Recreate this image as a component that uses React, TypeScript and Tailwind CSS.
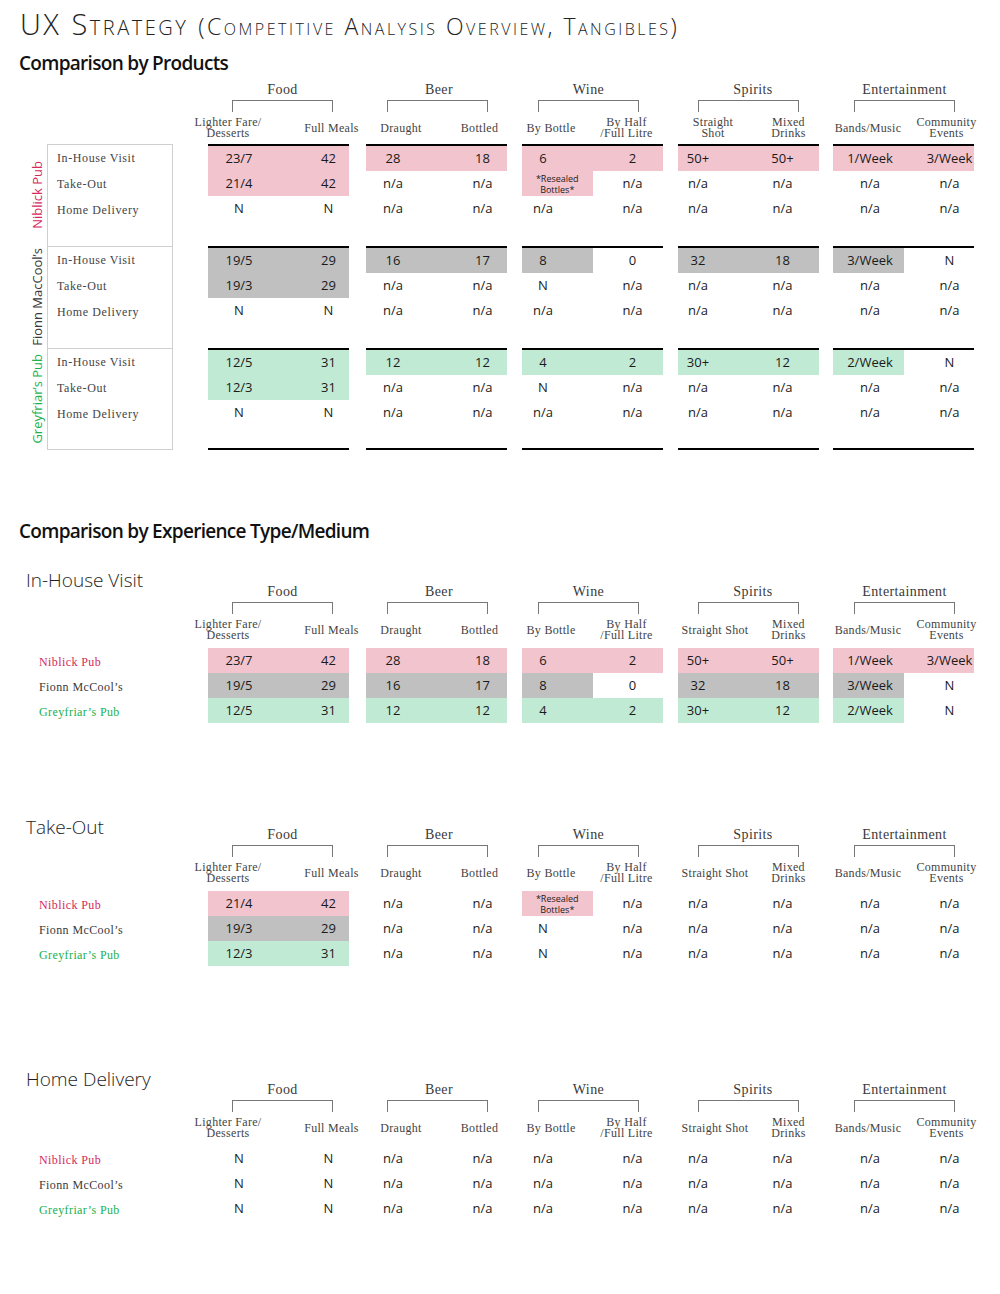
import React from "react";

type Group = {
  name: string;
  gap: string;
  bracket: string;
  title: string;
  h1: string;
  h2: string;
  h1b?: string;
  v1: string;
  v2: string;
  l1: string;
  l2: string;
  l1b?: string;
};

const groups: Group[] = [
  { name: "Food", gap: "ml-0", bracket: "ml-[24px]", title: "pl-0", h1: "ml-[20px]", h2: "ml-[53px]", v1: "ml-[31px]", v2: "ml-[50px]", l1: "Lighter Fare/\nDesserts", l2: "Full Meals" },
  { name: "Beer", gap: "ml-[17px]", bracket: "ml-[21px]", title: "pl-[3px]", h1: "ml-[35px]", h2: "ml-[43px]", v1: "ml-[27px]", v2: "ml-[46px]", l1: "Draught", l2: "Bottled" },
  { name: "Wine", gap: "ml-[15px]", bracket: "ml-[16px]", title: "pl-0", h1: "ml-[29px]", h2: "ml-[34px]", v1: "ml-[21px]", v2: "ml-[40px]", l1: "By Bottle", l2: "By Half\n/Full Litre" },
  { name: "Spirits", gap: "ml-[15px]", bracket: "ml-[20px]", title: "pl-[9px]", h1: "ml-[35px]", h1b: "ml-[37px]", h2: "ml-[40px]", v1: "ml-[20px]", v2: "ml-[34px]", l1: "Straight\nShot", l1b: "Straight Shot", l2: "Mixed\nDrinks" },
  { name: "Entertainment", gap: "ml-[14px]", bracket: "ml-[21px]", title: "pl-0", h1: "ml-[35px]", h2: "ml-[43px]", v1: "ml-[37px]", v2: "ml-[46px]", l1: "Bands/Music", l2: "Community\nEvents" },
];

type Medium = "inhouse" | "takeout" | "home";

type Pub = {
  name: string;
  short: string;
  text: string;
  bg: string;
  rows: Record<Medium, string[]>;
};

const home = ["N", "N", "n/a", "n/a", "n/a", "n/a", "n/a", "n/a", "n/a", "n/a"];

const pubs: Pub[] = [
  {
    name: "Niblick Pub",
    short: "Niblick Pub",
    text: "text-[#d42a5c]",
    bg: "bg-[#f2c4ce]",
    rows: {
      inhouse: ["23/7", "42", "28", "18", "6", "2", "50+", "50+", "1/Week", "3/Week"],
      takeout: ["21/4", "42", "n/a", "n/a", "*Resealed", "n/a", "n/a", "n/a", "n/a", "n/a"],
      home,
    },
  },
  {
    name: "Fionn MacCool’s",
    short: "Fionn McCool’s",
    text: "text-[#3a3a3a]",
    bg: "bg-[#c0c0c0]",
    rows: {
      inhouse: ["19/5", "29", "16", "17", "8", "0", "32", "18", "3/Week", "N"],
      takeout: ["19/3", "29", "n/a", "n/a", "N", "n/a", "n/a", "n/a", "n/a", "n/a"],
      home,
    },
  },
  {
    name: "Greyfriar’s Pub",
    short: "Greyfriar’s Pub",
    text: "text-[#20b14f]",
    bg: "bg-[#c1ead5]",
    rows: {
      inhouse: ["12/5", "31", "12", "12", "4", "2", "30+", "12", "2/Week", "N"],
      takeout: ["12/3", "31", "n/a", "n/a", "N", "n/a", "n/a", "n/a", "n/a", "n/a"],
      home,
    },
  },
];

const serif = "font-['Liberation_Serif',serif]";

function Anchor({ at, children }: { at: string; children: React.ReactNode }) {
  return (
    <div className={"flex w-0 justify-center " + at}>
      <div className="whitespace-pre text-center">{children}</div>
    </div>
  );
}

function Header({ compact }: { compact?: boolean }) {
  return (
    <div className="flex">
      {groups.map((g) => (
        <div key={g.name} className={"w-[141px] shrink-0 " + g.gap}>
          <div className={"w-[101px] " + g.bracket}>
            <div className={"flex h-[22px] items-center justify-center whitespace-nowrap text-[14px] tracking-[0.4px] text-[#3a3a3a] " + serif + " " + g.title}>
              {g.name}
            </div>
            <div className="h-[12px] border-x border-t border-[#777]" />
          </div>
          <div className={"flex h-[32px] items-center text-[12px] leading-[11px] tracking-[0.3px] text-[#444] " + serif}>
            <div className="flex w-1/2 items-center">
              <Anchor at={!compact && g.h1b ? g.h1b : g.h1}>{!compact && g.l1b ? g.l1b : g.l1}</Anchor>
            </div>
            <div className="flex w-1/2 items-center">
              <Anchor at={g.h2}>{g.l2}</Anchor>
            </div>
          </div>
        </div>
      ))}
    </div>
  );
}

function Cell({ t, bg, at }: { t: string; bg: string; at: string }) {
  const hl = t !== "n/a" && t !== "N" && t !== "0";
  if (t === "*Resealed") {
    return (
      <div className={"flex h-[25px] w-1/2 flex-col items-center justify-center text-[9px] leading-[11px] " + bg}>
        <span>*Resealed</span>
        <span>Bottles*</span>
      </div>
    );
  }
  return (
    <div className={"flex h-[25px] w-1/2 items-center " + (hl ? bg : "")}>
      <Anchor at={at}>{t}</Anchor>
    </div>
  );
}

function ValueRow({ values, bg, gi }: { values: string[]; bg: string; gi: number }) {
  const g = groups[gi];
  return (
    <div className="flex">
      <Cell t={values[gi * 2]} bg={bg} at={g.v1} />
      <Cell t={values[gi * 2 + 1]} bg={bg} at={g.v2} />
    </div>
  );
}

function ExperienceSection({ title, medium, mt, headMt }: { title: string; medium: Medium; mt: string; headMt: string }) {
  return (
    <div className={"flex " + mt}>
      <div className="flex w-[208px] shrink-0 flex-col">
        <div className={"h-[24px] pl-[26px] text-[19px] font-light leading-[24px] text-[#1e1e1e] " + headMt}>{title}</div>
        <div className={"mt-auto text-[12px] tracking-[0.4px] " + serif}>
          {pubs.map((p) => (
            <div key={p.short} className={"flex h-[25px] items-center pl-[39px] pt-[2px] " + p.text}>
              {p.short}
            </div>
          ))}
        </div>
      </div>
      <div>
        <Header />
        <div className="flex border-t-2 border-transparent">
          {groups.map((g, gi) => (
            <div key={g.name} className={"w-[141px] shrink-0 " + g.gap}>
              {pubs.map((p) => (
                <ValueRow key={p.short} values={p.rows[medium]} bg={p.bg} gi={gi} />
              ))}
            </div>
          ))}
        </div>
      </div>
    </div>
  );
}

const media: { key: Medium; label: string }[] = [
  { key: "inhouse", label: "In-House Visit" },
  { key: "takeout", label: "Take-Out" },
  { key: "home", label: "Home Delivery" },
];

export default function App() {
  return (
    <div className="min-h-[1294px] w-[1000px] bg-white pb-[40px] font-['Open_Sans',sans-serif] text-[13px] text-[#1a1a1a]">
      <h1 className="h-[34px] whitespace-nowrap pl-[20px] pt-[7px] text-[29px] font-light leading-[34px] tracking-[2.5px] text-[#222] [font-variant-caps:small-caps]">
        UX Strategy <span className="text-[23px] tracking-[2.5px]">(Competitive Analysis Overview, Tangibles)</span>
      </h1>
      <h2 className="mt-[17px] h-[24px] pl-[19px] text-[19px] font-semibold leading-[24px] tracking-[-0.7px] text-[#111]">
        Comparison by Products
      </h2>

      <div className="mt-[3px] flex">
        <div className="w-[208px] shrink-0" />
        <Header compact />
      </div>

      {pubs.map((p, i) => (
        <div key={p.name} className="flex h-[102px]">
          <div className="w-[28px] shrink-0" />
          <div className="flex w-[19px] shrink-0 items-center justify-center">
            <span className={"rotate-180 whitespace-nowrap text-[13px] [writing-mode:vertical-rl] " + p.text}>{p.name}</span>
          </div>
          <div
            className={
              "w-[126px] shrink-0 border-x border-t border-[#cfcfcf] pl-[9px] text-[12px] tracking-[0.6px] text-[#444] " +
              serif +
              (i === 2 ? " border-b" : "")
            }
          >
            {media.map((m) => (
              <div key={m.key} className="flex h-[26px] items-center">
                {m.label}
              </div>
            ))}
          </div>
          <div className="w-[35px] shrink-0" />
          <div className="flex">
            {groups.map((g, gi) => (
              <div
                key={g.name}
                className={"w-[141px] shrink-0 border-t-2 border-black " + g.gap + (i === 2 ? " border-b-2" : "")}
              >
                {media.map((m) => (
                  <ValueRow key={m.key} values={p.rows[m.key]} bg={p.bg} gi={gi} />
                ))}
              </div>
            ))}
          </div>
        </div>
      ))}

      <h2 className="mt-[69px] h-[24px] pl-[19px] text-[19px] font-semibold leading-[24px] tracking-[-0.7px] text-[#111]">
        Comparison by Experience Type/Medium
      </h2>

      <ExperienceSection title="In-House Visit" medium="inhouse" mt="mt-[37px]" headMt="-mt-[12px]" />
      <ExperienceSection title="Take-Out" medium="takeout" mt="mt-[100px]" headMt="-mt-[8px]" />
      <ExperienceSection title="Home Delivery" medium="home" mt="mt-[112px]" headMt="-mt-[11px]" />
    </div>
  );
}
